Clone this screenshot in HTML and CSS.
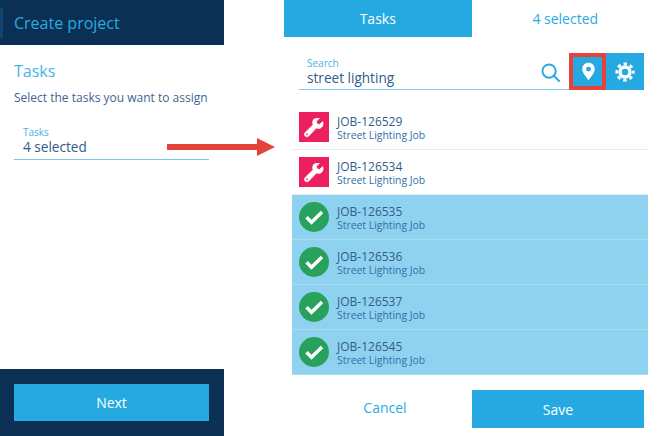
FILE: index.html
```html
<!DOCTYPE html>
<html lang="en">
<head>
<meta charset="utf-8">
<title>Create project</title>
<link rel="stylesheet" href="styles.css">
</head>
<body>
<div class="page">
  <aside class="left">
    <header class="left-head"><span class="accent"></span><h1>Create project</h1></header>
    <div class="left-body">
      <h2>Tasks</h2>
      <p>Select the tasks you want to assign</p>
      <div class="field">
        <label>Tasks</label>
        <div class="value">4 selected</div>
      </div>
    </div>
    <footer class="left-foot"><button class="btn">Next</button></footer>
  </aside>
  <main class="right">
    <nav class="tabs">
      <div class="tab active">Tasks</div>
      <div class="tab">4 selected</div>
    </nav>
    <div class="searchbar">
      <div class="search">
        <div class="search-text">
          <label>Search</label>
          <div class="value">street lighting</div>
        </div>
        <svg class="mag" width="19" height="19" viewBox="0 0 20 20" fill="none" stroke="#29abe2" stroke-width="2.100"><circle cx="8.500" cy="8.500" r="7"/><path d="M13.500 13.500l5.500 5.500" stroke-linecap="round"/></svg>
      </div>
      <div class="tool marked">
        <svg class="pin" width="13" height="19" viewBox="0 0 15 20"><path fill="#fff" fill-rule="evenodd" d="M7.500 0C3.400 0 .3 3.100.3 7.100c0 4.300 4.700 9.500 7.200 12.900 2.500-3.400 7.200-8.600 7.200-12.900C14.700 3.100 11.600 0 7.500 0zm0 4.400a2.800 2.800 0 1 1 0 5.600 2.800 2.800 0 0 1 0-5.600z"/></svg>
      </div>
      <div class="tool">
        <svg width="20" height="20" viewBox="0 0 20 20" fill="none" stroke="#fff"><circle cx="10" cy="10" r="5" stroke-width="3.400"/><circle cx="10" cy="10" r="8.200" stroke-width="2.800" stroke-dasharray="3.400 3.040" stroke-dashoffset="1.700"/></svg>
      </div>
    </div>
    <ul class="list">
      <li class="row">
        <span class="wrench"><svg width="20" height="20" viewBox="0 0 22 22"><path fill="#fff" stroke="#fff" stroke-width=".7" fill-rule="evenodd" d="M20.500 3.900l-3.500 3.300-2.700-.8-.7-2.700L17 .4c-2.700-.9-5.600-.2-6.800 1.900-1 1.700-.9 3.500-.2 5.100L1.300 15.900c-1.200 1.200-1.100 2.900-.1 4 1.100 1.100 2.900 1.100 4 0l8.500-8.800c1.700.6 3.600.6 5.200-.5 2-1.400 2.800-4.100 1.600-6.700zM3.300 19.100a1.300 1.300 0 1 1 0-2.600 1.300 1.300 0 0 1 0 2.600z"/></svg></span>
        <div class="job"><div class="id">JOB-126529</div><div class="type">Street Lighting Job</div></div>
      </li>
      <li class="row">
        <span class="wrench"><svg width="20" height="20" viewBox="0 0 22 22"><path fill="#fff" stroke="#fff" stroke-width=".7" fill-rule="evenodd" d="M20.500 3.900l-3.500 3.300-2.700-.8-.7-2.700L17 .4c-2.700-.9-5.600-.2-6.800 1.900-1 1.700-.9 3.500-.2 5.100L1.300 15.900c-1.200 1.200-1.100 2.900-.1 4 1.100 1.100 2.900 1.100 4 0l8.500-8.800c1.700.6 3.600.6 5.200-.5 2-1.400 2.800-4.100 1.600-6.700zM3.300 19.100a1.300 1.300 0 1 1 0-2.600 1.300 1.300 0 0 1 0 2.600z"/></svg></span>
        <div class="job"><div class="id">JOB-126534</div><div class="type">Street Lighting Job</div></div>
      </li>
      <li class="row sel">
        <span class="check"><svg width="30" height="30" viewBox="0 0 30 30"><path d="M7.500 15.300l5 5L23 10" fill="none" stroke="#fff" stroke-width="3.400"/></svg></span>
        <div class="job"><div class="id">JOB-126535</div><div class="type">Street Lighting Job</div></div>
      </li>
      <li class="row sel">
        <span class="check"><svg width="30" height="30" viewBox="0 0 30 30"><path d="M7.500 15.300l5 5L23 10" fill="none" stroke="#fff" stroke-width="3.400"/></svg></span>
        <div class="job"><div class="id">JOB-126536</div><div class="type">Street Lighting Job</div></div>
      </li>
      <li class="row sel">
        <span class="check"><svg width="30" height="30" viewBox="0 0 30 30"><path d="M7.500 15.300l5 5L23 10" fill="none" stroke="#fff" stroke-width="3.400"/></svg></span>
        <div class="job"><div class="id">JOB-126537</div><div class="type">Street Lighting Job</div></div>
      </li>
      <li class="row sel">
        <span class="check"><svg width="30" height="30" viewBox="0 0 30 30"><path d="M7.500 15.300l5 5L23 10" fill="none" stroke="#fff" stroke-width="3.400"/></svg></span>
        <div class="job"><div class="id">JOB-126545</div><div class="type">Street Lighting Job</div></div>
      </li>
    </ul>
    <footer class="actions">
      <div class="cancel">Cancel</div>
      <button class="btn save">Save</button>
    </footer>
  </main>
  <svg class="arrow" width="108" height="18" viewBox="0 0 108 18"><path fill="#e5433a" d="M0 6h90V0l18 9-18 9v-6H0z"/></svg>
</div>
</body>
</html>
```

FILE: styles.css
```css
* { box-sizing: border-box; }
html, body { margin: 0; padding: 0; }
body {
  width: 659px;
  height: 436px;
  overflow: hidden;
  background: #fff;
  font-family: "Open Sans", sans-serif;
  color: #2f5d8a;
}
.page { position: relative; display: flex; width: 659px; height: 436px; }

.left { display: flex; flex-direction: column; width: 224px; height: 436px; }
.left-head {
  position: relative;
  height: 45px;
  padding-left: 14px;
  display: flex;
  align-items: center;
  background: #0b3054;
}
.accent { position: absolute; left: 0; top: 8px; width: 3px; height: 30px; background: #0e4472; }
.left-head h1 { margin: 0; font-size: 16px; font-weight: 400; color: #29abe2; }
.left-body { flex: 1; padding: 16px 14px 0; }
.left-body h2 { margin: 0; font-size: 16px; line-height: 20px; font-weight: 400; color: #45b4e6; }
.left-body p { margin: 8px 0 0; font-size: 12px; line-height: 17px; color: #3e6590; }
.field {
  margin-top: 20px;
  padding: 0 9px;
  height: 34px;
  width: 195px;
  border-bottom: 1px solid #7cc8ec;
}
label { display: block; font-size: 10px; line-height: 12px; font-weight: 400; color: #45b4e6; }
.value { font-size: 13.600px; line-height: 17px; color: #2f5d8a; }
.left-foot { height: 67px; padding: 15px 15px 15px 14px; background: #0b3054; }
.btn {
  display: block;
  border: 0;
  padding: 0;
  margin: 0;
  width: 100%;
  height: 37px;
  background: #25a9e0;
  color: #fff;
  font: 400 14px "Open Sans", sans-serif;
}

.right { display: flex; flex-direction: column; width: 375px; margin-left: 60px; }
.tabs { display: flex; height: 37px; }
.tab {
  flex: 1;
  display: flex;
  align-items: center;
  justify-content: center;
  font-size: 14px;
  color: #29abe2;
}
.tab.active { background: #25a9e0; color: #fff; }
.searchbar { display: flex; margin: 16px 0 0 15px; height: 37px; width: 345px; }
.search {
  flex: 1;
  display: flex;
  align-items: flex-start;
  justify-content: space-between;
  padding: 4px 9px 0 8px;
  border-bottom: 1px solid #7cc8ec;
}
.mag { margin-top: 6px; }
.tool {
  width: 38px;
  height: 37px;
  display: flex;
  align-items: center;
  justify-content: center;
  background: #25a9e0;
}
.tool.marked { border: 4px solid #e5433a; width: 37px; }
.pin { margin-left: 1px; }
.list { list-style: none; margin: 15px 0 0 8px; padding: 0; width: 356px; }
.row {
  display: flex;
  align-items: center;
  gap: 8px;
  height: 45px;
  padding-left: 7px;
  border-bottom: 1px solid #dff0fa;
}
.row.sel { background: #8fd2f0; border-bottom: 1px solid #a5dcf4; }
.wrench {
  width: 30px;
  height: 30px;
  display: flex;
  align-items: center;
  justify-content: center;
  padding-top: 2px;
  background: #ec205f;
}
.check { width: 30px; height: 30px; border-radius: 50%; background: #27a15c; display: block; }
.check svg { display: block; }
.job { display: flex; flex-direction: column; padding-top: 2px; }
.id { font-size: 12px; line-height: 15px; color: #2f5d8a; }
.type { font-size: 10.400px; line-height: 13px; color: #326fa6; }
.actions { display: flex; align-items: center; margin-top: 15px; }
.cancel { width: 188px; padding: 0 0 3px 14px; text-align: center; font-size: 14px; color: #29abe2; }
.btn.save { width: 172px; height: 38px; }
.arrow { position: absolute; left: 167px; top: 138px; }
```
